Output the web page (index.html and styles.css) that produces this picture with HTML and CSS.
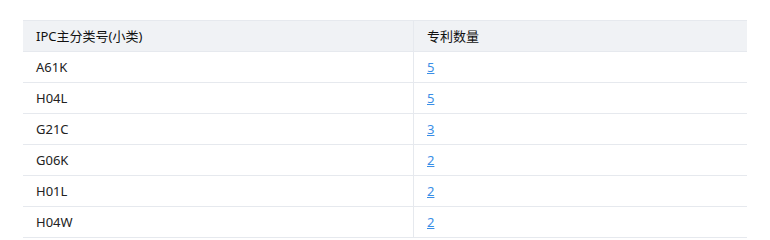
FILE: index.html
```html
<!DOCTYPE html>
<html lang="zh">
<head>
<meta charset="utf-8">
<link rel="stylesheet" href="styles.css">
</head>
<body>
<div class="wrap">
  <table class="tbl">
    <thead>
      <tr><th class="c1">IPC主分类号(小类)</th><th class="c2">专利数量</th></tr>
    </thead>
    <tbody>
      <tr><td class="c1">A61K</td><td class="c2"><a href="#">5</a></td></tr>
      <tr><td class="c1">H04L</td><td class="c2"><a href="#">5</a></td></tr>
      <tr><td class="c1">G21C</td><td class="c2"><a href="#">3</a></td></tr>
      <tr><td class="c1">G06K</td><td class="c2"><a href="#">2</a></td></tr>
      <tr><td class="c1">H01L</td><td class="c2"><a href="#">2</a></td></tr>
      <tr><td class="c1">H04W</td><td class="c2"><a href="#">2</a></td></tr>
    </tbody>
  </table>
</div>
</body>
</html>
```
FILE: styles.css
```css
html, body { margin: 0; padding: 0; background: #fff; }
body { font-family: "Noto Sans", "Noto Sans CJK SC", sans-serif; font-size: 13px; color: #222; }
.wrap { padding: 20px 23px 0 23px; }
.tbl { width: 724px; border-collapse: collapse; table-layout: fixed; }
.tbl th, .tbl td {
  height: 30px; padding: 0 0 0 13px; text-align: left; font-weight: normal;
  border-bottom: 1px solid #e6e9ee; box-sizing: content-box; vertical-align: middle; line-height: 18px;
}
.tbl thead th { background: #f0f2f5; border-top: 1px solid #e6e9ee; color: #111; }
.tbl .c1 { width: 377px; border-right: 1px solid #e6e9ee; }
.tbl a { color: #3a8ee6; text-decoration: underline; }
```
